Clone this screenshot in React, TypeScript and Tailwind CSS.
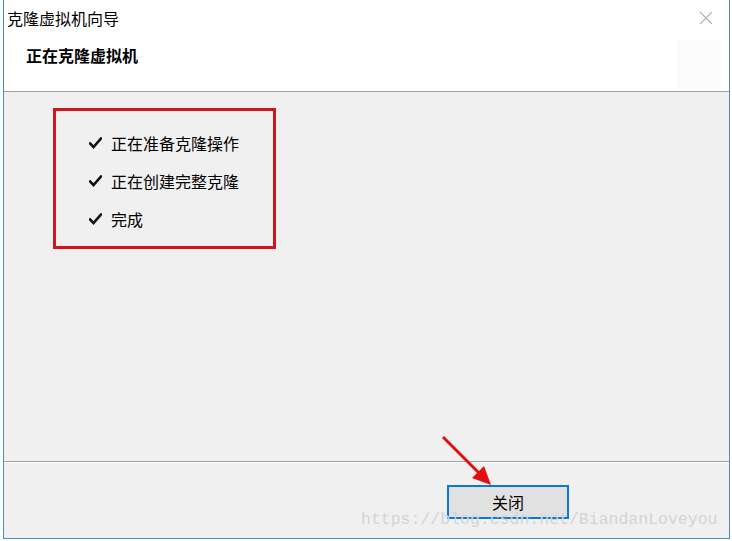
import React from 'react';

const FONT = { fontFamily: '"Noto Sans CJK SC", "Noto Sans", sans-serif' };

const steps = ['正在准备克隆操作', '正在创建完整克隆', '完成'];

const Check = () => (
  <svg width="13" height="12" viewBox="0 0 13 12" className="shrink-0">
    <path d="M1 6.5 L4.5 10 L12 1.5" fill="none" stroke="#111" strokeWidth="2.6" strokeLinecap="square" />
  </svg>
);

const CloseX = () => (
  <svg width="14" height="14" viewBox="0 0 14 14">
    <path d="M1 1 L13 13 M13 1 L1 13" stroke="#b4b4b4" strokeWidth="1.2" />
  </svg>
);

export default function App() {
  return (
    <div className="relative w-[732px] h-[541px] overflow-hidden bg-white" style={FONT}>
      <div className="ml-[3px] w-[727px] h-[539px] border-x border-b border-[#4a8fbf] flex flex-col bg-[#f0f0f0]">
        {/* title bar */}
        <div className="h-[35px] bg-white flex items-center justify-between pl-[3px] pr-[16px]">
          <span className="text-[16px] text-black leading-none">克隆虚拟机向导</span>
          <CloseX />
        </div>
        {/* header */}
        <div className="h-[57px] bg-white border-b border-[#a0a0a0] flex items-start pl-[22px] pt-[8px] pr-[8px] justify-between">
          <span className="text-[16px] font-bold text-black leading-[24px]">正在克隆虚拟机</span>
          <div className="w-[44px] h-[48px] bg-[#fbfbfb] -mt-[3px]" />
        </div>
        {/* content */}
        <div className="flex-1 pt-[16px] pl-[49px]">
          <div className="w-[223px] h-[141px] border-[3px] border-[#d0151b] flex flex-col pt-[20px] pl-[33px] gap-[14px]">
            {steps.map((s) => (
              <div key={s} className="flex items-center gap-[9px] h-[24px]">
                <Check />
                <span className="text-[16px] text-black leading-none">{s}</span>
              </div>
            ))}
          </div>
        </div>
        {/* footer */}
        <div className="h-[77px] border-t border-[#a0a0a0] shadow-[inset_0_1px_0_#ffffff] pt-[23px] pl-[443px]">
          <button className="w-[122px] h-[34px] border-2 border-[#0a78d4] bg-[#e1e1e1] text-[16px] text-black flex items-center justify-center leading-none">
            关闭
          </button>
        </div>
      </div>
      {/* annotation arrow */}
      <svg className="absolute left-0 top-0 pointer-events-none" width="732" height="541">
        <line x1="443" y1="437" x2="480" y2="474" stroke="#e01010" strokeWidth="3" />
        <polygon points="491,485 472,478 484,466" fill="#e01010" />
      </svg>
      {/* watermark */}
      <div
        className="absolute left-[361px] top-[512px] text-[16.5px] leading-none text-[#d4d4d4] whitespace-nowrap"
        style={{ fontFamily: '"Liberation Mono", monospace' }}
      >
        https://blog.csdn.net/BiandanLoveyou
      </div>
    </div>
  );
}
